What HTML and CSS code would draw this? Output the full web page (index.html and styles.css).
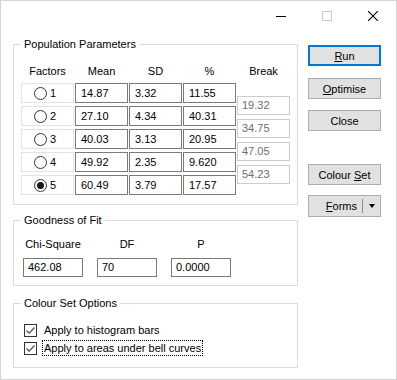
FILE: index.html
```html
<!DOCTYPE html>
<html lang="en">
<head>
    <meta charset="UTF-8">
    <meta name="viewport" content="width=device-width, initial-scale=1.0">
    <title>Population Parameters</title>
    <link rel="stylesheet" href="styles.css">
</head>
<body>
    <div class="window">
        <div class="titlebar">
            <span class="tb-btn">
                <svg width="10" height="10" viewBox="0 0 10 10"><line x1="0" y1="5.5" x2="10" y2="5.5" stroke="#000" stroke-width="1"/></svg>
            </span>
            <span class="tb-btn">
                <svg width="10" height="10" viewBox="0 0 10 10"><rect x="0.5" y="0.5" width="9" height="9" fill="none" stroke="#cccccc" stroke-width="1"/></svg>
            </span>
            <span class="tb-btn">
                <svg width="10" height="10" viewBox="0 0 10 10"><path d="M0 0 L10 10 M10 0 L0 10" stroke="#000" stroke-width="1.1"/></svg>
            </span>
        </div>

        <div class="main">
            <div class="left">
                <div class="group group-params">
                    <span class="group-title">Population Parameters</span>
                    <div class="params">
                        <div class="param-grid">
                            <div class="head">Factors</div>
                            <div class="head">Mean</div>
                            <div class="head">SD</div>
                            <div class="head">%</div>

                            <div class="factor"><span class="radio"></span>1</div>
                            <div class="value">14.87</div>
                            <div class="value">3.32</div>
                            <div class="value">11.55</div>

                            <div class="factor"><span class="radio"></span>2</div>
                            <div class="value">27.10</div>
                            <div class="value">4.34</div>
                            <div class="value">40.31</div>

                            <div class="factor"><span class="radio"></span>3</div>
                            <div class="value">40.03</div>
                            <div class="value">3.13</div>
                            <div class="value">20.95</div>

                            <div class="factor"><span class="radio"></span>4</div>
                            <div class="value">49.92</div>
                            <div class="value">2.35</div>
                            <div class="value">9.620</div>

                            <div class="factor"><span class="radio checked"></span>5</div>
                            <div class="value">60.49</div>
                            <div class="value">3.79</div>
                            <div class="value">17.57</div>
                        </div>
                        <div class="breaks">
                            <div class="head">Break</div>
                            <div class="break-list">
                                <div class="break-box">19.32</div>
                                <div class="break-box">34.75</div>
                                <div class="break-box">47.05</div>
                                <div class="break-box">54.23</div>
                            </div>
                        </div>
                    </div>
                </div>

                <div class="group group-fit">
                    <span class="group-title">Goodness of Fit</span>
                    <div class="fit-grid">
                        <div class="head">Chi-Square</div>
                        <div class="head">DF</div>
                        <div class="head">P</div>
                        <div class="value">462.08</div>
                        <div class="value">70</div>
                        <div class="value">0.0000</div>
                    </div>
                </div>

                <div class="group group-colour">
                    <span class="group-title">Colour Set Options</span>
                    <div class="check-row">
                        <span class="checkbox">
                            <svg width="11" height="11" viewBox="0 0 11 11"><polyline points="1.5,5.5 4.2,8.2 9.5,2.5" fill="none" stroke="#4d4d4d" stroke-width="1.2"/></svg>
                        </span>
                        <span class="check-label">Apply to histogram bars</span>
                    </div>
                    <div class="check-row">
                        <span class="checkbox">
                            <svg width="11" height="11" viewBox="0 0 11 11"><polyline points="1.5,5.5 4.2,8.2 9.5,2.5" fill="none" stroke="#4d4d4d" stroke-width="1.2"/></svg>
                        </span>
                        <span class="check-label focused">Apply to areas under bell curves</span>
                    </div>
                </div>
            </div>

            <div class="buttons">
                <button class="btn default"><u>R</u>un</button>
                <button class="btn btn-optimise"><u>O</u>ptimise</button>
                <button class="btn btn-close">Close</button>
                <button class="btn btn-colour">Colour <u>S</u>et</button>
                <div class="btn split">
                    <span class="split-main"><u>F</u>orms</span>
                    <span class="split-arrow"></span>
                </div>
            </div>
        </div>
    </div>
</body>
</html>
```

FILE: styles.css
```css
* {
    margin: 0;
    padding: 0;
    box-sizing: border-box;
}

body {
    background-color: #fff;
    font-family: "Liberation Sans", Arial, sans-serif;
    font-size: 11px;
    color: #000;
}

.window {
    width: 397px;
    height: 380px;
    border: 1px solid #d4d4d4;
    background-color: #fff;
}

.titlebar {
    height: 29px;
    display: flex;
    justify-content: flex-end;
}

.tb-btn {
    width: 46px;
    height: 29px;
    display: flex;
    align-items: center;
    justify-content: center;
}

.tb-btn svg {
    display: block;
}

.main {
    display: flex;
    padding: 14px 0 0 12px;
}

.left {
    width: 285px;
}

.group {
    position: relative;
    border: 1px solid #dcdcdc;
}

.group-title {
    position: absolute;
    top: -8px;
    left: 7px;
    padding: 0 3px;
    line-height: 15px;
    background-color: #fff;
    white-space: nowrap;
}

.head {
    display: flex;
    align-items: center;
    justify-content: center;
    white-space: nowrap;
}

/* population parameters */

.group-params {
    padding: 16px 0 9px 7px;
}

.params {
    display: flex;
    gap: 1px;
}

.param-grid {
    display: grid;
    grid-template-columns: repeat(4, 53px);
    grid-template-rows: 19px repeat(5, 20px);
    column-gap: 1px;
    row-gap: 3px;
}

.factor {
    display: flex;
    align-items: center;
    gap: 3px;
    padding-left: 12px;
    border: 1px solid #e3e3e3;
}

.radio {
    width: 13px;
    height: 13px;
    border: 1px solid #333;
    border-radius: 50%;
    background-color: #fff;
    display: flex;
    align-items: center;
    justify-content: center;
}

.radio.checked::after {
    content: "";
    width: 7px;
    height: 7px;
    border-radius: 50%;
    background-color: #1a1a1a;
}

.value {
    border: 1px solid #7a7a7a;
    padding-left: 5px;
    line-height: 18px;
    white-space: nowrap;
}

.breaks {
    width: 53px;
}

.breaks .head {
    height: 19px;
}

.break-list {
    display: flex;
    flex-direction: column;
    gap: 4px;
    margin-top: 16px;
}

.break-box {
    height: 19px;
    border: 1px solid #cccccc;
    color: #6d6d6d;
    padding-left: 4px;
    line-height: 17px;
}

/* goodness of fit */

.group-fit {
    margin-top: 15px;
    padding: 15px 0 8px 9px;
}

.fit-grid {
    display: grid;
    grid-template-columns: repeat(3, 60px);
    grid-template-rows: 16px 19px;
    column-gap: 14px;
    row-gap: 6px;
}

.fit-grid .value {
    line-height: 17px;
    padding-left: 4px;
}

/* colour set options */

.group-colour {
    margin-top: 17px;
    padding: 18px 0 11px 10px;
    display: flex;
    flex-direction: column;
    gap: 2px;
}

.check-row {
    display: flex;
    align-items: center;
    gap: 5px;
    height: 16px;
}

.checkbox {
    width: 13px;
    height: 13px;
    border: 1px solid #333;
    background-color: #fff;
}

.checkbox svg {
    display: block;
}

.check-label {
    padding: 0 1px;
    line-height: 14px;
    border: 1px solid transparent;
}

.check-label.focused {
    border: 1px dotted #000;
}

/* buttons */

.buttons {
    margin-left: 10px;
    margin-top: 1px;
    width: 73px;
    display: flex;
    flex-direction: column;
}

.btn {
    height: 21px;
    border: 1px solid #adadad;
    background-color: #e1e1e1;
    font-family: "Liberation Sans", Arial, sans-serif;
    font-size: 11px;
    color: #000;
}

.btn.default {
    border: 2px solid #0078d7;
}

.btn-optimise {
    margin-top: 12px;
}

.btn-close {
    margin-top: 11px;
}

.btn-colour {
    margin-top: 33px;
}

.split {
    margin-top: 10px;
    height: 22px;
    display: flex;
    align-items: center;
}

.split-main {
    flex: 1;
    text-align: right;
    padding-right: 5px;
    border-right: 1px solid #8c8c8c;
    line-height: 14px;
}

.split-arrow {
    width: 17px;
    display: flex;
    justify-content: center;
}

.split-arrow::after {
    content: "";
    border-left: 3.5px solid transparent;
    border-right: 3.5px solid transparent;
    border-top: 4px solid #000;
}
```
